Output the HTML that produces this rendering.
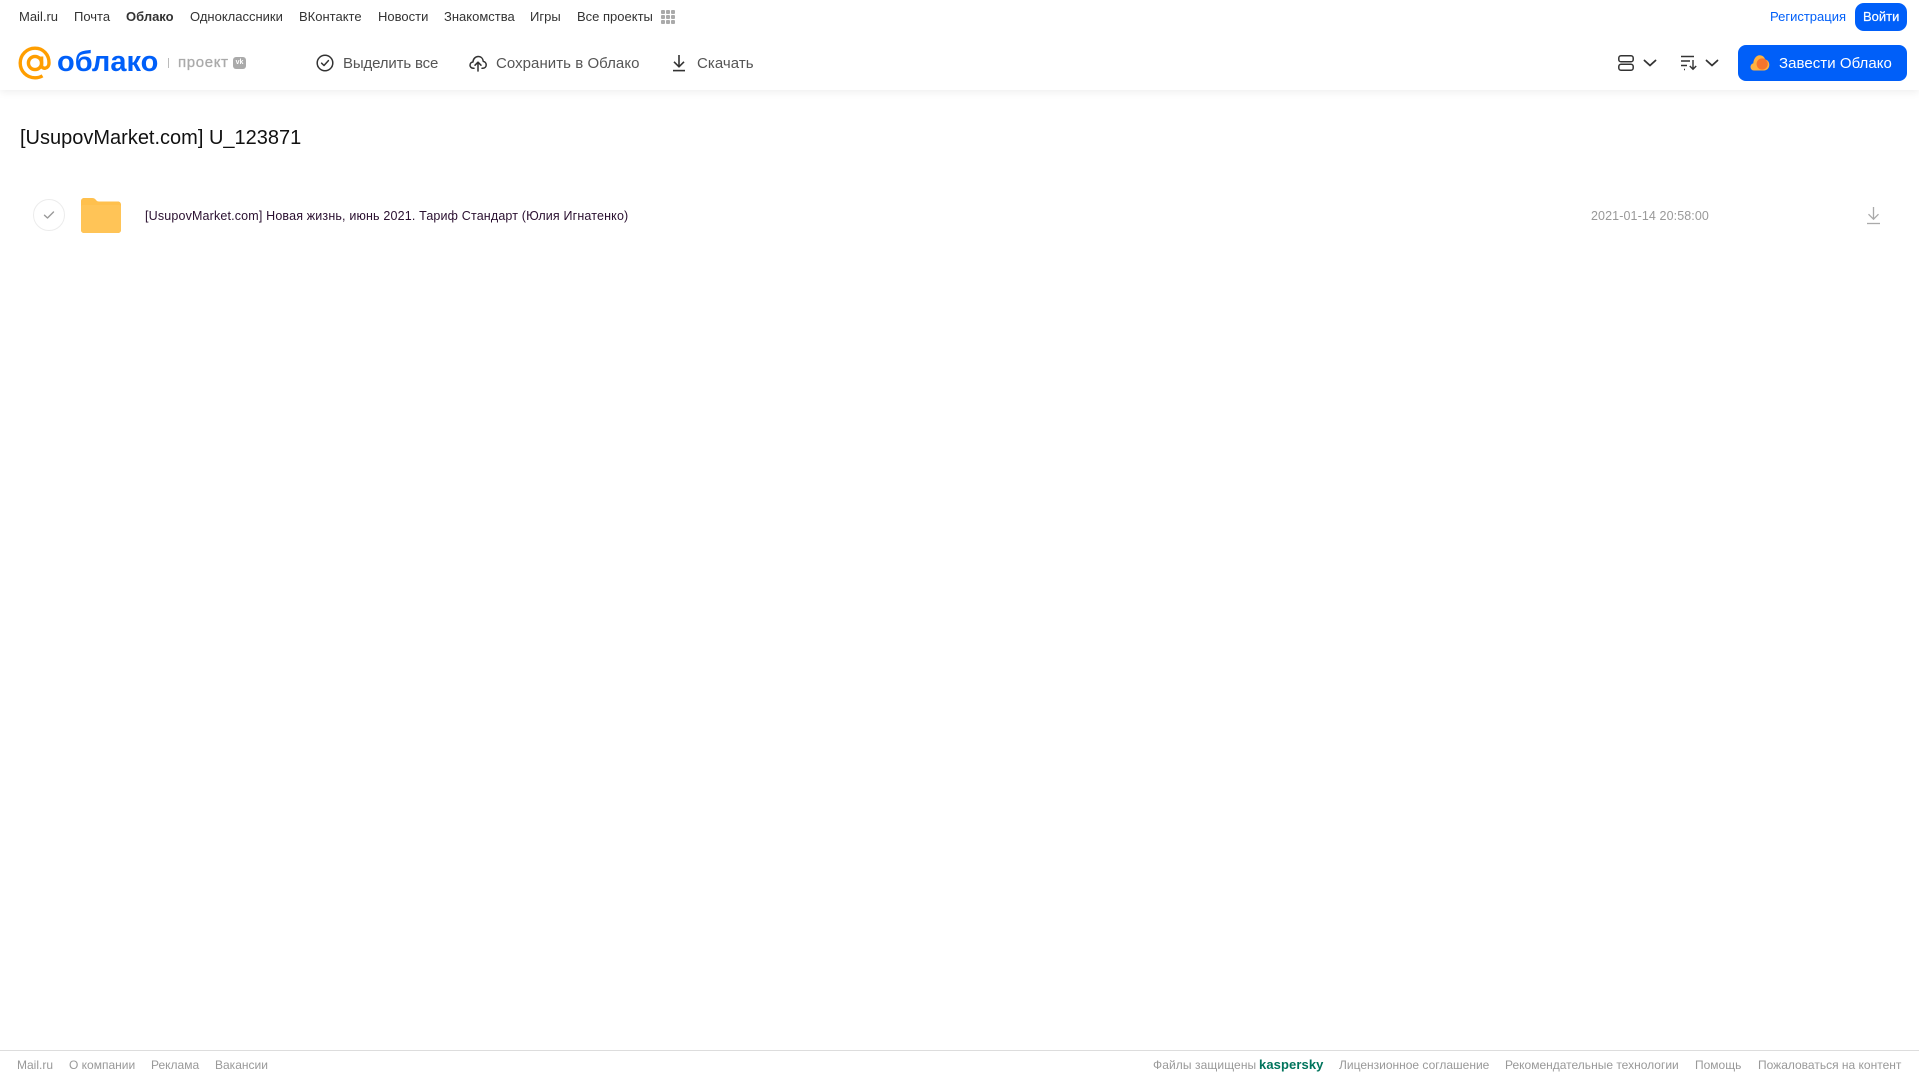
<!DOCTYPE html>
<html lang="ru"><head><meta charset="utf-8"><title>Облако</title>
<style>
html,body{margin:0;padding:0;background:#fff}
body{width:1919px;height:1079px;position:relative;overflow:hidden;font-family:"Liberation Sans",Arial,sans-serif}
.t{position:absolute;white-space:nowrap;line-height:20px;height:20px}
.n{font-size:13px;top:7px;color:#333}
.b{font-size:15px;top:54px;color:#555;letter-spacing:.05px}
.f{font-size:12px;top:1055px;color:#999}
svg{position:absolute;display:block}
#hd{position:absolute;left:0;top:0;width:1919px;height:90px;background:#fff;box-shadow:0 2px 8px rgba(0,0,0,.07)}
</style></head><body>
<div id="hd"></div>
<span class="t n" style="left:19px">Mail.ru</span>
<span class="t n" style="left:74px">Почта</span>
<span class="t n" style="left:126px;font-weight:bold">Облако</span>
<span class="t n" style="left:190px">Одноклассники</span>
<span class="t n" style="left:299px">ВКонтакте</span>
<span class="t n" style="left:378px">Новости</span>
<span class="t n" style="left:444px">Знакомства</span>
<span class="t n" style="left:530px">Игры</span>
<span class="t n" style="left:577px">Все проекты</span>
<svg style="left:660px;top:9px" width="16" height="16" fill="#aaa"><rect x="1" y="1" width="4" height="4" rx="1"/><rect x="6" y="1" width="4" height="4" rx="1"/><rect x="11" y="1" width="4" height="4" rx="1"/><rect x="1" y="6" width="4" height="4" rx="1"/><rect x="6" y="6" width="4" height="4" rx="1"/><rect x="11" y="6" width="4" height="4" rx="1"/><rect x="1" y="11" width="4" height="4" rx="1"/><rect x="6" y="11" width="4" height="4" rx="1"/><rect x="11" y="11" width="4" height="4" rx="1"/></svg>
<span class="t n" style="left:1770px;color:#005ff9">Регистрация</span>
<div style="position:absolute;left:1855px;top:3px;width:52px;height:28px;border-radius:9px;background:#005ff9"></div>
<span class="t n" style="left:1863px;color:#fff;-webkit-text-stroke:.2px #fff">Войти</span>

<svg style="left:18px;top:46px" width="34" height="34" viewBox="0 0 34 34" fill="none" stroke="#ff9e00" stroke-width="3.4"><circle cx="17" cy="17" r="6.6"/><path d="M23.6 10.5V19.5C23.6 23.5 30.9 23.5 31 17C31.2 8.5 25 2.2 17 2.2C8.7 2.2 2.2 8.8 2.2 17C2.2 25.2 8.7 31.8 17 31.8C20 31.8 22.5 31 24.5 29.8"/></svg>
<span class="t" id="logo" style="left:57px;top:45px;height:34px;line-height:34px;font-size:29px;font-weight:bold;color:#005ff9;letter-spacing:0">облако</span>
<div style="position:absolute;left:168px;top:58px;width:1px;height:10px;background:#bbb"></div>
<span class="t" style="left:178px;top:53px;font-size:15px;color:#aaa;letter-spacing:.65px;-webkit-text-stroke:.3px #aaa">проект</span>
<div style="position:absolute;left:233px;top:57px;width:13px;height:12px;border-radius:3px;background:#aaa;color:#fff;font:bold 7px/12px 'Liberation Sans',sans-serif;text-align:center">vk</div>

<svg style="left:316px;top:54px" width="18" height="18" viewBox="0 0 18 18" fill="none" stroke="#333" stroke-width="1.5"><circle cx="9" cy="9" r="7.8"/><path d="M5.6 9.2L8 11.5L12.4 6.6" stroke-linecap="round" stroke-linejoin="round"/></svg>
<span class="t b" style="left:343px;letter-spacing:-.15px">Выделить все</span>
<svg style="left:469px;top:54px" width="18" height="18" viewBox="0 0 18 18" fill="none" stroke="#333" stroke-width="1.5" stroke-linecap="round" stroke-linejoin="round"><path d="M5 14.2H4.2C2.3 14.2 1 12.8 1 11.2C1 9.5 2.2 8.2 3.9 8C4.2 4.8 6.4 2.5 9.2 2.5C12 2.5 14 4.5 14.3 7.4C16 7.7 17.2 9.2 17.2 10.9C17.2 12.8 15.8 14.2 14 14.2H13"/><path d="M9 17V8.5M6 11.2L9 8.2L12 11.2"/></svg>
<span class="t b" style="left:496px">Сохранить в Облако</span>
<svg style="left:671px;top:54px" width="16" height="18" viewBox="0 0 16 18" fill="none" stroke="#333" stroke-width="1.6"><path d="M8 1V12.5M3 7.8L8 12.8L13 7.8"/><path d="M2 16.6H14"/></svg>
<span class="t b" style="left:697px">Скачать</span>

<svg style="left:1618px;top:55px" width="16" height="16" viewBox="0 0 16 16" fill="none" stroke="#333" stroke-width="1.5"><rect x=".8" y=".8" width="14.4" height="6" rx="2.2"/><rect x=".8" y="9.2" width="14.4" height="6" rx="2.2"/></svg>
<svg style="left:1643px;top:59px" width="14" height="8" viewBox="0 0 14 8" fill="none" stroke="#333" stroke-width="1.8"><path d="M1.5 1.5L7 6.5L12.5 1.5" stroke-linecap="round" stroke-linejoin="round"/></svg>
<svg style="left:1680px;top:55px" width="18" height="16" viewBox="0 0 18 16" fill="none" stroke="#333" stroke-width="1.4"><path d="M1 1.5H14M1 6H10M1 10.5H7M4 14.5H5"/><path d="M13 5V14M9.8 11L13 14.2L16.2 11"/></svg>
<svg style="left:1705px;top:59px" width="14" height="8" viewBox="0 0 14 8" fill="none" stroke="#333" stroke-width="1.8"><path d="M1.5 1.5L7 6.5L12.5 1.5" stroke-linecap="round" stroke-linejoin="round"/></svg>

<div style="position:absolute;left:1738px;top:45px;width:169px;height:36px;border-radius:8px;background:#005ff9"></div>
<svg style="left:1750px;top:54px" width="20" height="18" viewBox="0 0 20 18"><path d="M4 16.5C1.8 16.5 .5 14.8 .5 13C.5 11 1.8 9.6 3.3 9.2C3.5 5 6.3 1.2 9.7 1.2C12.6 1.2 14.5 3.2 15.2 5.5C17.6 6 19.3 8 19.3 10.8C19.3 14.2 17 16.5 14 16.5Z" fill="#ffb23f"/><circle cx="12.2" cy="10" r="5.6" fill="#f5752e"/></svg>
<span class="t b" style="left:1779px;color:#fff">Завести Облако</span>

<span class="t" id="title" style="left:20px;top:126px;height:24px;line-height:24px;font-size:20px;color:#111;letter-spacing:0">[UsupovMarket.com] U_123871</span>

<div style="position:absolute;left:33px;top:199px;width:30px;height:30px;border:1px solid #ececec;border-radius:50%"></div>
<svg style="left:42px;top:209px" width="14" height="12" viewBox="0 0 14 12" fill="none" stroke="#999" stroke-width="1.4"><path d="M2.5 6.2L5.5 9L11.5 3" stroke-linecap="round" stroke-linejoin="round"/></svg>
<svg style="left:81px;top:198px" width="40" height="35" viewBox="0 0 40 35"><path d="M3 0H11C13 0 14 .8 15 2C15.7 3 16.5 3.5 18 3.5H37C38.7 3.5 40 4.8 40 6.5V32C40 33.7 38.7 35 37 35H3C1.3 35 0 33.7 0 32V3C0 1.3 1.3 0 3 0Z" fill="#ffc04d"/><path d="M0 9C0 7.5 1 7 2 7H38C39 7 40 7.5 40 9V32C40 33.7 38.7 35 37 35H3C1.3 35 0 33.7 0 32Z" fill="#ffc457"/></svg>
<span class="t" style="left:145px;top:206px;font-size:12.5px;color:#2a1030;letter-spacing:.16px">[UsupovMarket.com] Новая жизнь, июнь 2021. Тариф Стандарт (Юлия Игнатенко)</span>
<span class="t" style="left:1591px;top:206px;font-size:12.5px;color:#999;letter-spacing:.1px">2021-01-14 20:58:00</span>
<svg style="left:1866px;top:206px" width="15" height="19" viewBox="0 0 15 19" fill="none" stroke="#aaa" stroke-width="1.3"><path d="M7.5 1V13M2.5 8.2L7.5 13.2L12.5 8.2"/><path d="M1 17.5H14"/></svg>

<div style="position:absolute;left:0;top:1050px;width:1919px;height:1px;background:#ddd"></div>
<span class="t f" style="left:17px">Mail.ru</span>
<span class="t f" style="left:69px">О компании</span>
<span class="t f" style="left:151px">Реклама</span>
<span class="t f" style="left:215px">Вакансии</span>
<span class="t f" style="left:1153px;letter-spacing:.1px">Файлы защищены</span>
<span class="t f" style="left:1259px;font-size:13px;font-weight:bold;color:#00745c;letter-spacing:.1px">kaspersky</span>
<span class="t f" style="left:1339px">Лицензионное соглашение</span>
<span class="t f" style="left:1505px">Рекомендательные технологии</span>
<span class="t f" style="left:1695px">Помощь</span>
<span class="t f" style="left:1758px">Пожаловаться на контент</span>
</body></html>
